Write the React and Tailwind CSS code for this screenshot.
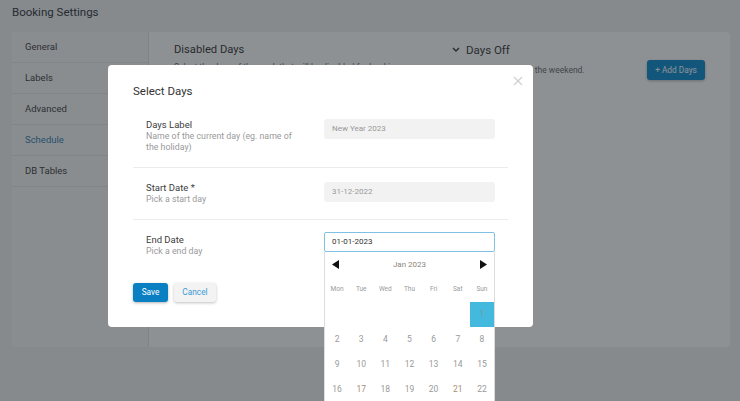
import React from "react";

const font = { fontFamily: "Roboto, 'Liberation Sans', sans-serif" };

function Sidebar() {
  const items = ["General", "Labels", "Advanced", "Schedule", "DB Tables"];
  return (
    <div className="w-[137px] shrink-0 bg-[#f7f7f7] border-r border-[#e2e2e2]">
      {items.map((it) => (
        <div
          key={it}
          className={
            "h-[31px] flex items-center pl-[13px] text-[9.5px] border-b border-[#e6e6e6] " +
            (it === "Schedule" ? "text-[#2f7fb0]" : "text-[#3a3a3a]")
          }
        >
          {it}
        </div>
      ))}
    </div>
  );
}

function Row({ label, desc, children, last }) {
  return (
    <div
      className={
        "flex items-start justify-between pl-[13px] pr-[13px] pb-[14px] " +
        (last ? "pt-[12px]" : "pt-[13px] border-b border-[#ececec]")
      }
    >
      <div className={"w-[160px] " + (last ? "mt-[1px]" : "")}>
        <div className="text-[9.5px] leading-[13px] text-[#3c3c3c]">{label}</div>
        <div className="text-[8.8px] leading-[11px] text-[#9a9a9a]">{desc}</div>
      </div>
      <div className={"relative w-[171px] " + (last ? "" : "mt-[1px]")}>{children}</div>
    </div>
  );
}

function Calendar() {
  const days = ["Mon", "Tue", "Wed", "Thu", "Fri", "Sat", "Sun"];
  const cells = [];
  for (let i = 0; i < 6; i++) cells.push(null);
  for (let d = 1; d <= 31; d++) cells.push(d);
  const warm = [17, 21];
  return (
    <div className="absolute left-0 top-full w-[171px] bg-white border border-[#dcdcdc] border-t-0 z-30">
      <div className="h-[25px] flex items-center justify-between px-[7px]">
        <svg width="7" height="9" viewBox="0 0 7 9">
          <polygon points="7,0 7,9 0,4.5" fill="#111" />
        </svg>
        <span className="text-[8px] text-[#8d8578]">Jan 2023</span>
        <svg width="7" height="9" viewBox="0 0 7 9">
          <polygon points="0,0 0,9 7,4.5" fill="#111" />
        </svg>
      </div>
      <div className="grid grid-cols-7">
        {days.map((d) => (
          <div key={d} className="h-[25px] flex items-center justify-center text-[6.5px] text-[#9a9a9a]">
            {d}
          </div>
        ))}
        {cells.map((d, i) => (
          <div
            key={i}
            className={
              "h-[25px] flex items-center justify-center text-[8.5px] " +
              (d === 1
                ? "bg-[#43b9de] text-[#7d98a3]"
                : warm.includes(d)
                ? "text-[#a88e72]"
                : "text-[#9a9a9a]")
            }
          >
            {d}
          </div>
        ))}
      </div>
    </div>
  );
}

export default function App() {
  return (
    <div className="relative w-[740px] h-[401px] overflow-hidden bg-[#f0f0f1]" style={font}>
      {/* page */}
      <div className="px-[12px]">
        <div className="h-[32px] pt-[5px] text-[11.5px] leading-[15px] text-[#2c3338]">Booking Settings</div>
        <div className="flex w-[718px] h-[315px] bg-white rounded-[4px] overflow-hidden">
          <Sidebar />
          <div className="flex-1 flex px-[25px] pt-[10px]">
            <div className="w-[280px]">
              <div className="text-[11.2px] leading-[16px] text-[#333]">Disabled Days</div>
              <div className="text-[8.5px] mt-[3px] text-[#666]">
                Select the days of the week that will be disabled for booking.
              </div>
            </div>
            <div className="flex-1">
              <div className="flex items-center gap-[6px] text-[11.5px] leading-[16px] text-[#333]">
                <svg width="8" height="6" viewBox="0 0 8 6" className="ml-[-2px]">
                  <polyline points="1,1 4,4 7,1" fill="none" stroke="#333" strokeWidth="1.4" />
                </svg>
                Days Off
              </div>
              <div className="flex items-center justify-between mt-[2px]">
                <div className="text-[8.5px] text-[#666]">Add the days off, like the weekend.</div>
                <button className="h-[20px] w-[58px] rounded-[3px] bg-[#0689cf] text-white text-[8.3px] shadow-[0_1px_3px_rgba(0,0,0,0.3)]">
                  + Add Days
                </button>
              </div>
            </div>
          </div>
        </div>
      </div>

      {/* overlay */}
      <div className="absolute inset-0 bg-[rgba(30,36,41,0.5)]" />

      {/* modal */}
      <div className="absolute left-[108px] top-[65px] w-[425px] bg-white rounded-[4px] px-[25px] pt-[19px] pb-[25px] z-20">
        <svg
          className="absolute right-[10px] top-[11px]"
          width="10"
          height="10"
          viewBox="0 0 10 10"
        >
          <path d="M1 1 L9 9 M9 1 L1 9" stroke="#cfcfcf" strokeWidth="1.2" />
        </svg>
        <div className="text-[11.5px] leading-[15px] text-[#333]">Select Days</div>
        <div className="mt-[6px]">
          <Row label="Days Label" desc="Name of the current day (eg. name of the holiday)">
            <div className="h-[20px] rounded-[3px] bg-[#f2f2f2] flex items-center px-[8px] text-[8px] text-[#999]">
              New Year 2023
            </div>
          </Row>
          <Row label="Start Date *" desc="Pick a start day">
            <div className="h-[20px] rounded-[3px] bg-[#f2f2f2] flex items-center px-[8px] text-[8px] text-[#999]">
              31-12-2022
            </div>
          </Row>
          <Row label="End Date" desc="Pick a end day" last>
            <div className="h-[20px] rounded-[2px] bg-white border border-[#80c0e4] flex items-center px-[7px] text-[8px] text-[#333]">
              01-01-2023
            </div>
            <Calendar />
          </Row>
        </div>
        <div className="flex gap-[6px] mt-[12px]">
          <button className="h-[19px] w-[35px] rounded-[3px] bg-[#0a7fc2] text-white text-[8.3px] shadow-[0_1px_3px_rgba(0,0,0,0.3)]">
            Save
          </button>
          <button className="h-[19px] w-[42px] rounded-[3px] bg-[#f3f3f3] text-[#3a9ad6] text-[8.3px] shadow-[0_1px_3px_rgba(0,0,0,0.25)]">
            Cancel
          </button>
        </div>
      </div>
    </div>
  );
}
